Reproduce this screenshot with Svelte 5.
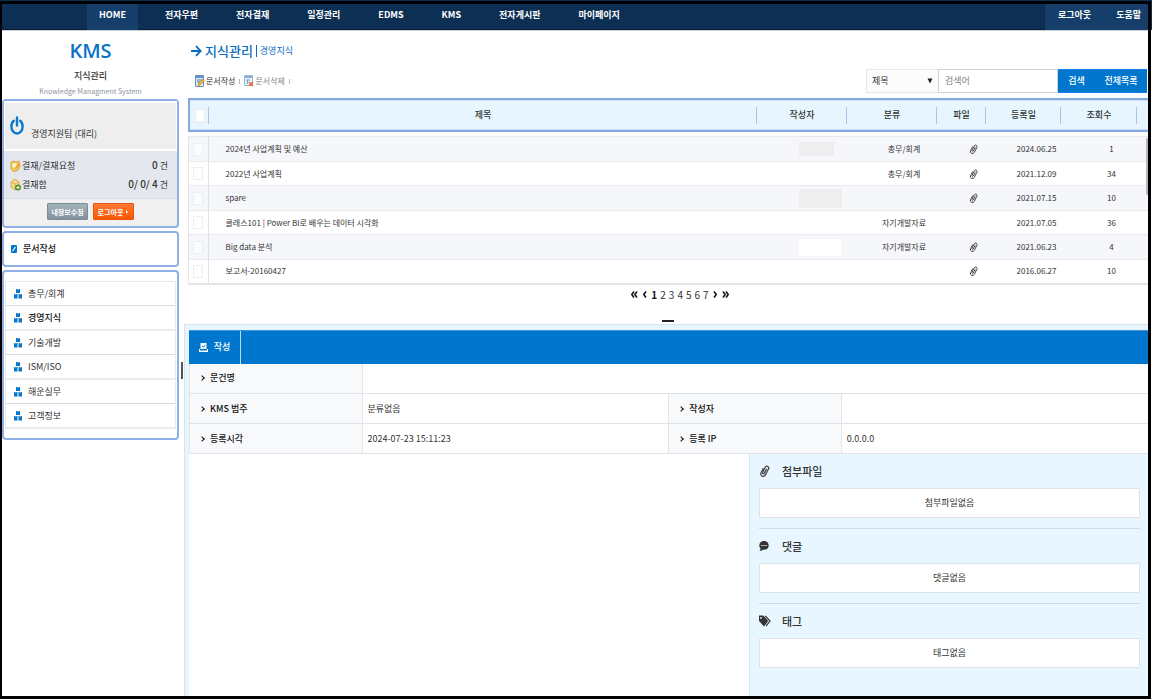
<script lang="ts">
	interface Doc {
		title: string;
		author: '' | 'short' | 'long' | 'blank';
		category: string;
		file: boolean;
		date: string;
		hits: number;
	}

	const menu = ['HOME', '전자우편', '전자결재', '일정관리', 'EDMS', 'KMS', '전자게시판', '마이페이지'];
	const categories = ['총무/회계', '경영지식', '기술개발', 'ISM/ISO', '해운실무', '고객정보'];
	const pages = [1, 2, 3, 4, 5, 6, 7];

	const docs: Doc[] = [
		{ title: '2024년 사업계획 및 예산', author: 'short', category: '총무/회계', file: true, date: '2024.06.25', hits: 1 },
		{ title: '2022년 사업계획', author: '', category: '총무/회계', file: true, date: '2021.12.09', hits: 34 },
		{ title: 'spare', author: 'long', category: '', file: true, date: '2021.07.15', hits: 10 },
		{ title: '클래스101 | Power BI로 배우는 데이터 시각화', author: '', category: '자기개발자료', file: false, date: '2021.07.05', hits: 36 },
		{ title: 'Big data 분석', author: 'blank', category: '자기개발자료', file: true, date: '2021.06.23', hits: 4 },
		{ title: '보고서-20160427', author: '', category: '', file: true, date: '2016.06.27', hits: 10 }
	];

	const extras = [
		{ icon: 'clip', title: '첨부파일', empty: '첨부파일없음' },
		{ icon: 'comment', title: '댓글', empty: '댓글없음' },
		{ icon: 'tag', title: '태그', empty: '태그없음' }
	];

	let selected = $state('경영지식');
	let page = $state(1);
	let field = $state('제목');
	let keyword = $state('');
</script>

{#snippet clip(size: number)}
	<svg width={size} height={size} viewBox="0 0 12 12" fill="none" stroke="#444" stroke-width="1.2" stroke-linecap="round" aria-hidden="true">
		<path d="M7.4 4.2 5.2 8.4a.9.9 0 0 1-1.600-.9L6.300 2.200a1.800 1.800 0 0 1 3.200 1.700L6.300 10.100a2.400 2.400 0 0 1-4.300-2.300L4.200 3.500" />
	</svg>
{/snippet}

<div class="frame">
	<header class="topbar">
		<nav class="menu">
			{#each menu as item, i}
				<a href="#menu" class:home={i === 0}>{item}</a>
			{/each}
		</nav>
		<div class="account">
			<a href="#logout">로그아웃</a>
			<a href="#help">도움말</a>
		</div>
	</header>

	<div class="body">
		<aside class="sidebar">
			<div class="brand">
				<strong>KMS</strong>
				<span class="brand-name">지식관리</span>
				<small>Knowledge Managment System</small>
			</div>

			<section class="box user">
				<div class="who">
					<svg width="14" height="20" viewBox="0 0 14 20" fill="none" stroke="#0a78cd" stroke-width="2.4" stroke-linecap="round" aria-hidden="true">
						<path d="M7 1.500v8M3.800 4.800C2.200 6 1.400 8 1.400 10.500c0 4 2.500 7 5.600 7s5.600-3 5.600-7c0-2.500-.8-4.500-2.400-5.700" />
					</svg>
					<span>경영지원팀 (대리)</span>
				</div>
				<div class="stats">
					<div class="stat">
						<svg width="11" height="12" viewBox="0 0 11 12" aria-hidden="true">
							<path d="M1 2 4 1l2 1 3-1 1 5-2 4-4 2-3-3z" fill="#f2c95a" stroke="#c9962e" stroke-width=".7" />
							<path d="m2 4 4-1 1 4-4 1z" fill="#fff3c4" />
							<path d="m5 8 4-5 1 1-4 5z" fill="#f09a2a" />
						</svg>
						<span>결재/결재요청</span>
						<span class="count"><b>0</b> 건</span>
					</div>
					<div class="stat">
						<svg width="11" height="13" viewBox="0 0 11 13" aria-hidden="true">
							<path d="m1 4 4-3 4 3v5l-4 3-4-3z" fill="#f7dc8c" stroke="#c99a38" stroke-width=".8" />
							<path d="m1 4 4 2 4-2M5 6v6" fill="none" stroke="#d8ab4a" stroke-width=".8" />
							<circle cx="8" cy="9.500" r="3" fill="#56912b" />
							<path d="M8 8v3M6.500 9.500h3" stroke="#fff" stroke-width="1" />
						</svg>
						<span>결재함</span>
						<span class="count"><b>0/ 0/ 4</b> 건</span>
					</div>
				</div>
				<div class="user-actions">
					<button class="edit">내정보수정</button>
					<button class="logout">로그아웃 <svg width="4" height="6" viewBox="0 0 4 6" aria-hidden="true"><path d="m1 1 2 2-2 2z" fill="#fff" /></svg></button>
				</div>
			</section>

			<a class="box write" href="#write">
				<svg width="6" height="8" viewBox="0 0 6 8" aria-hidden="true">
					<rect width="6" height="8" rx="1" fill="#0077cd" />
					<path d="m1.500 6 3-4" stroke="#fff" stroke-width="1.200" />
				</svg>
				문서작성
			</a>

			<section class="box tree">
				<ul>
					{#each categories as name}
						<li>
							<button class:on={selected === name} onclick={() => (selected = name)}>
								<svg width="8" height="11" viewBox="0 0 8 11" fill="#0a78cd" aria-hidden="true">
									<path d="M2 1h4v4H2zM0 6h3.500v4.500H0zM4.500 6H8v4.500H4.500z" />
									<path d="M3.500 1h1v1h-1zM1.300 6h1v1h-1zM5.800 6h1v1h-1z" fill="#9cc8ec" />
								</svg>
								{name}
							</button>
						</li>
					{/each}
				</ul>
			</section>
		</aside>

		<div class="splitter"><span></span></div>

		<main class="content">
			<div class="list-pane">
				<div class="heading">
					<div class="heading-left">
						<h1>
							<svg width="11" height="12" viewBox="0 0 11 12" fill="none" stroke="#0a6cc0" stroke-width="1.800" aria-hidden="true">
								<path d="M0 6h9.500M5 1.200 9.700 6 5 10.800" />
							</svg>
							지식관리 <i></i> <small>경영지식</small>
						</h1>
						<div class="tools">
							<button>
								<svg width="10" height="12" viewBox="0 0 10 12" aria-hidden="true">
									<path d="M.5.500h8v11h-8z" fill="#dcebf8" stroke="#6a90b8" />
									<path d="M1 1h7v2H1z" fill="#5d94cc" />
									<path d="M2 5h5M2 7h3" stroke="#477bb0" />
									<path d="m3 11 .5-2.500 4.500-4.500 1.500 1.500L5 10z" fill="#f4b72f" stroke="#b17a1b" stroke-width=".6" />
								</svg>
								문서작성
							</button>
							<i></i>
							<button class="dim">
								<svg width="10" height="12" viewBox="0 0 10 12" aria-hidden="true">
									<path d="M.5.500h8v10h-8z" fill="#e7f1fa" stroke="#9ab6d2" />
									<path d="M1 1h7v2H1z" fill="#88b0d8" />
									<path d="M2 5h4M3.500 5v4" stroke="#7a9fc4" />
									<path d="m5 7 4 4m0-4-4 4" stroke="#ee6a35" stroke-width="1.600" />
								</svg>
								문서삭제
							</button>
							<i></i>
						</div>
					</div>
					<form class="search" onsubmit={(e) => e.preventDefault()}>
						<div class="field">
							<select aria-label="검색 조건" bind:value={field}>
								<option>제목</option>
								<option>작성자</option>
							</select>
							<svg width="6" height="6" viewBox="0 0 6 6" aria-hidden="true"><path d="M.5.500h5L3 5.500z" fill="#222" /></svg>
						</div>
						<input type="text" aria-label="검색어" placeholder="검색어" bind:value={keyword} />
						<button class="go">검색</button>
						<button class="all" type="button" onclick={() => (keyword = '')}>전체목록</button>
					</form>
				</div>

				<table class="list-head">
					<thead>
						<tr>
							<th class="c-check"><input type="checkbox" aria-label="전체 선택" /></th>
							<th>제목</th>
							<th class="c-author">작성자</th>
							<th class="c-category">분류</th>
							<th class="c-file">파일</th>
							<th class="c-date">등록일</th>
							<th class="c-hits">조회수</th>
							<td class="c-gutter"></td>
						</tr>
					</thead>
				</table>

				<div class="list-scroll">
					<table class="list-body">
						<tbody>
							{#each docs as doc}
								<tr>
									<td class="c-check"><input type="checkbox" aria-label={doc.title} /></td>
									<td class="title">{doc.title}</td>
									<td class="c-author">
										{#if doc.author}<span class="mask {doc.author}"></span>{/if}
									</td>
									<td class="c-category">{doc.category}</td>
									<td class="c-file">{#if doc.file}{@render clip(10)}{/if}</td>
									<td class="c-date">{doc.date}</td>
									<td class="c-views">{doc.hits}</td>
								</tr>
							{/each}
						</tbody>
					</table>
					<span class="thumb"></span>
				</div>

				<nav class="pager">
					<button class="arrow" aria-label="처음">
						<svg width="7" height="7" viewBox="0 0 7 7"><path d="M3 .5.800 3.500 3 6.500M6 .5 3.800 3.500 6 6.500" /></svg>
					</button>
					<button class="arrow" aria-label="이전">
						<svg width="4" height="7" viewBox="0 0 4 7"><path d="M3 .5.800 3.500 3 6.500" /></svg>
					</button>
					{#each pages as n}
						<button class:current={page === n} onclick={() => (page = n)}>{n}</button>
					{/each}
					<button class="arrow" aria-label="다음">
						<svg width="4" height="7" viewBox="0 0 4 7"><path d="M1 .5 3.200 3.500 1 6.500" /></svg>
					</button>
					<button class="arrow" aria-label="마지막">
						<svg width="7" height="7" viewBox="0 0 7 7"><path d="M1 .5 3.200 3.500 1 6.500M4 .5 6.200 3.500 4 6.500" /></svg>
					</button>
				</nav>
				<div class="grip"></div>
			</div>

			<div class="detail-pane">
				<div class="tabs">
					<button>
						<svg width="9" height="9" viewBox="0 0 9 9" aria-hidden="true">
							<path d="M1.500 0h6v6h-6zM0 6h1v1.500h7V6h1v3H0z" fill="#fff" />
							<path d="m3 3 1.200 1.300L6.300 1.800" fill="none" stroke="#0077cd" />
						</svg>
						작성
					</button>
				</div>

				<table class="info">
					<colgroup>
						<col class="label" /><col class="value" /><col class="label" /><col class="value" />
					</colgroup>
					<tbody>
						<tr>
							<th scope="row"><span>문건명</span></th>
							<td colspan="3"></td>
						</tr>
						<tr>
							<th scope="row"><span>KMS 범주</span></th>
							<td>분류없음</td>
							<th scope="row"><span>작성자</span></th>
							<td></td>
						</tr>
						<tr>
							<th scope="row"><span>등록시각</span></th>
							<td>2024-07-23 15:11:23</td>
							<th scope="row"><span>등록 IP</span></th>
							<td>0.0.0.0</td>
						</tr>
					</tbody>
				</table>

				<div class="lower">
					<div class="document"></div>
					<div class="extras">
						{#each extras as extra}
							<section>
								<h2>
									{#if extra.icon === 'clip'}
										{@render clip(12)}
									{:else if extra.icon === 'comment'}
										<svg width="12" height="12" viewBox="0 0 12 12" aria-hidden="true">
											<path d="M5 1C2 1 .300 3 .300 5.400c0 1.400.5 2.300 1.300 3.100L.600 11c1.500 0 2.600-.5 3.300-1.200C7.500 10.200 9.700 8.200 9.700 5.400 9.700 3 8 1 5 1z" fill="#333" />
											<path d="M2.300 5.500h1.200M4.400 5.500h1.200M6.500 5.500h1.200" stroke="#fff" stroke-width="1.100" />
										</svg>
									{:else}
										<svg width="12" height="12" viewBox="0 0 12 12" aria-hidden="true">
											<path d="M0 .500h4.200L9.200 6 5 11.500 0 6z" fill="#333" />
											<circle cx="2" cy="3" r=".9" fill="#e8f7ff" />
											<path d="M6.200 1 11 6 7 11.200" fill="none" stroke="#333" stroke-width="1.200" />
										</svg>
									{/if}
									{extra.title}
								</h2>
								<p>{extra.empty}</p>
							</section>
						{/each}
					</div>
				</div>
			</div>
		</main>
	</div>
</div>

<style>
	:global(body) {
		background: #fff;
	}

	:global(#app) {
		display: flex;
		flex-direction: column;
		box-sizing: border-box;
		min-height: 100vh;
		padding: 1px 1px 1px 0;
		background: linear-gradient(#0d2f54 30px, #fff 30px);
	}

	.frame {
		flex: 1;
		display: flex;
		flex-direction: column;
		background: #fff;
		border: 3px solid #000;
		border-left-width: 2px;
		color: #333;
		font: 9px/12px 'Noto Sans CJK KR', sans-serif;
	}

	.frame *,
	.frame *::before {
		box-sizing: border-box;
	}

	a {
		color: inherit;
		text-decoration: none;
	}

	button {
		padding: 0;
		border: 0;
		background: none;
		color: inherit;
		font: inherit;
		cursor: pointer;
	}

	svg {
		flex: none;
	}

	/* Top menu */
	.topbar {
		display: flex;
		justify-content: space-between;
		height: 27px;
		background: #0d2f54;
		border-bottom: 1px solid #c8d0d8;
		box-shadow: inset 0 -1px #071d3a;
		color: #fff;
		font-weight: 700;
	}

	.menu,
	.account {
		display: flex;
	}

	.menu {
		padding-left: 85px;
	}

	.menu a {
		padding: 5px 19px;
	}

	.menu .home {
		margin-right: 8px;
		padding: 5px 12px;
		background: #153e6b;
	}

	.account {
		gap: 25px;
		padding: 0 7px 0 13px;
		background: #153e6b;
	}

	.account a {
		padding: 5px 0;
	}

	.body {
		flex: 1;
		display: flex;
	}

	/* Sidebar */
	.sidebar {
		flex: none;
		display: flex;
		flex-direction: column;
		gap: 3px;
		width: 177px;
	}

	.brand {
		display: flex;
		flex-direction: column;
		align-items: center;
		height: 65px;
		padding-top: 8px;
	}

	.brand strong {
		color: #0a72c7;
		font: 600 20px/24px 'Open Sans', sans-serif;
	}

	.brand-name {
		margin-top: 7px;
		font-weight: 500;
	}

	.brand small {
		margin-top: 4px;
		color: #8d93a0;
		font-size: 7px;
		line-height: 10px;
	}

	.box {
		border: 2px solid #8fb0e6;
		border-radius: 4px;
	}

	.user {
		background: #f0f0f0;
	}

	.who {
		display: flex;
		align-items: center;
		gap: 7px;
		height: 50px;
		padding: 0 5px;
		background: #eee;
		border: 1px solid #fff;
		border-top-width: 2px;
		border-bottom-width: 2px;
	}

	.who span {
		padding-top: 16px;
	}

	.stats {
		padding: 5px 9px 4px 6px;
		background: #e5e7ee;
		border-bottom: 1px solid #d9dbe0;
	}

	.stat {
		display: flex;
		align-items: center;
		gap: 1px;
		height: 19px;
	}

	.count {
		margin-left: auto;
	}

	.count b {
		font-size: 10px;
		font-weight: 500;
	}

	.user-actions {
		display: flex;
		justify-content: center;
		gap: 5px;
		padding: 4px 0 6px;
	}

	.user-actions button {
		display: flex;
		align-items: center;
		justify-content: center;
		width: 41px;
		height: 17px;
		border: 1px solid #7d8d97;
		border-radius: 1px;
		background: linear-gradient(#a3b1ba, #83939e);
		color: #fff;
		font-size: 7px;
		font-weight: 700;
	}

	.user-actions .logout {
		gap: 2px;
		border-color: #e8540b;
		background: linear-gradient(#ff7a35, #f65600);
	}

	.write {
		display: flex;
		align-items: center;
		gap: 6px;
		height: 36px;
		padding-left: 7px;
		color: #111;
		font-weight: 500;
	}

	.tree {
		padding: 9px 1px 9px;
	}

	.tree ul {
		margin: 0;
		padding: 0;
		list-style: none;
		border: 1px solid #e8e8e8;
		border-bottom: 0;
	}

	.tree li {
		border-bottom: 1px solid #dcdcdc;
	}

	.tree li:nth-child(even) {
		border-bottom: 2px solid #ececec;
	}

	.tree button {
		display: flex;
		align-items: center;
		gap: 6px;
		width: 100%;
		height: 23px;
		padding-left: 8px;
	}

	.tree .on {
		color: #111;
		font-weight: 500;
	}

	.splitter {
		flex: none;
		display: flex;
		width: 5px;
		padding: 331px 1px 0 2px;
	}

	.splitter span {
		width: 2px;
		height: 17px;
		background: #555;
	}

	/* Document list */
	.content {
		flex: 1;
		display: flex;
		flex-direction: column;
		min-width: 0;
	}

	.list-pane {
		padding-left: 4px;
	}

	.heading {
		display: flex;
		justify-content: space-between;
		align-items: flex-end;
		height: 67px;
		padding: 0 1px 5px 3px;
	}

	.heading-left {
		padding-bottom: 3px;
	}

	h1 {
		display: flex;
		align-items: center;
		gap: 3px;
		margin: 0;
		color: #0a6cc0;
		font-size: 13px;
		font-weight: 500;
		line-height: 20px;
	}

	h1 i {
		width: 1px;
		height: 12px;
		background: #0a6cc0;
	}

	h1 small {
		font-size: 9px;
		font-weight: 400;
	}

	.tools {
		display: flex;
		align-items: center;
		gap: 4px;
		padding: 11px 0 0 4px;
	}

	.tools button {
		display: flex;
		align-items: center;
		gap: 1px;
		height: 18px;
		font-size: 8px;
	}

	.tools .dim {
		color: #888;
	}

	.tools i {
		width: 1px;
		height: 5px;
		background: #bbb;
	}

	.search {
		display: flex;
		height: 24px;
	}

	.field {
		display: flex;
		align-items: center;
		width: 72px;
		padding-right: 5px;
		border: 1px solid #e6e6e6;
		border-right: 0;
		background: #fcfcfc;
	}

	select {
		flex: 1;
		height: 100%;
		padding: 0 0 0 5px;
		border: 0;
		background: none;
		appearance: none;
		color: #333;
		font: inherit;
	}

	.search input {
		width: 120px;
		padding: 0 6px;
		border: 1px solid #ccd3da;
		border-radius: 0;
		font: inherit;
	}

	.search input::placeholder {
		color: #808080;
	}

	.search button {
		background: #0077cd;
		border: 1px solid #0f80f0;
		border-width: 1px 0;
		color: #fff;
		font-weight: 500;
	}

	.go {
		width: 37px;
	}

	.all {
		width: 52px;
	}

	table {
		width: 100%;
		border-collapse: collapse;
		table-layout: fixed;
	}

	th,
	td {
		padding: 0;
	}

	input[type='checkbox'] {
		display: block;
		width: 10px;
		height: 13px;
		margin: 0 auto;
		appearance: none;
		background: #fff;
		border: 1px solid #eceef1;
	}

	.c-check {
		width: 19px;
	}

	.c-author,
	.c-category {
		width: 90px;
	}

	.c-file {
		width: 49px;
	}

	.c-date {
		width: 75px;
	}

	.c-hits {
		width: 76px;
	}

	.c-views {
		width: 73px;
	}

	.c-gutter {
		width: 11px;
	}

	.list-head {
		height: 34px;
		border-collapse: separate;
		border-spacing: 0;
		background: #e7f6fe;
		border: 2px solid #86a8e0;
		border-right: 0;
		box-shadow: inset 0 1px #cfdff4, inset 0 -1px #cfdff4;
	}

	.list-head th {
		background: linear-gradient(#a9c4ea, #a9c4ea) right center / 1px 17px no-repeat;
		font-weight: 500;
	}

	.list-scroll {
		position: relative;
		margin-top: 4px;
		border-left: 1px solid #e3e5e8;
	}

	.thumb {
		position: absolute;
		top: 2px;
		right: 0;
		width: 2px;
		height: 57px;
		background: #b8b8b8;
		border-radius: 1px;
	}

	.list-body {
		border-top: 1px solid #dfe1e5;
		border-bottom: 2px solid #e3e4e6;
		font-size: 8px;
	}

	.list-body td {
		height: 25px;
		border-top: 1px solid #e8eaed;
		text-align: center;
	}

	.list-body tr:nth-child(even) td {
		height: 24px;
	}

	.list-body tr:nth-child(odd) {
		background: #f6f7fb;
	}

	.list-body tr:nth-child(odd) input {
		background: #fbfcfd;
	}

	.list-body .c-check {
		border-right: 1px solid #dfe1e5;
	}

	.list-body .c-date {
		width: 77px;
	}

	.list-body .title {
		padding-left: 17px;
		text-align: left;
	}

	.list-body svg,
	.mask {
		display: block;
		margin: 0 auto;
	}

	.list-body .c-author {
		padding-left: 30px;
	}

	.mask {
		width: 35px;
		height: 14px;
		margin: 0;
		background: #eee;
	}

	.mask.long {
		width: 43px;
		height: 19px;
	}

	.mask.blank {
		width: 42px;
		height: 17px;
		background: #fff;
	}

	.pager {
		display: flex;
		align-items: center;
		justify-content: center;
		gap: 3px;
		height: 20px;
		padding-left: 24px;
		font-size: 10px;
	}

	.pager .current {
		color: #111;
		font-weight: 700;
	}

	.arrow {
		display: flex;
		margin: 0 1px;
	}

	.arrow svg {
		fill: none;
		stroke: #111;
		stroke-width: 1.5;
	}

	.grip {
		width: 12px;
		height: 2px;
		margin: 15px auto 2px;
		background: #222;
	}

	/* Detail */
	.detail-pane {
		flex: 1;
		display: flex;
		flex-direction: column;
		padding: 5px 0 0 4px;
		background: #e7f6fe;
		border-top: 1px solid #d9e2e9;
		border-left: 1px solid #d9e2e9;
	}

	.tabs {
		display: flex;
		height: 34px;
		background: #0077cd;
		border-top: 1px solid #3f93d4;
	}

	.tabs button {
		display: flex;
		align-items: center;
		justify-content: center;
		gap: 6px;
		width: 52px;
		border-right: 1px solid #b9dbf3;
		color: #fff;
		font-weight: 500;
	}

	.info {
		background: #fff;
	}

	.label {
		width: 18%;
	}

	.value {
		width: 32%;
	}

	.info th,
	.info td {
		height: 30px;
		padding-left: 5px;
		border-bottom: 1px solid #dfe3e7;
		text-align: left;
	}

	.info th {
		padding-left: 12px;
		background: #f8f9fb;
		border-right: 1px solid #e3e6ea;
		border-left: 1px solid #e3e6ea;
		color: #111;
		font-weight: 500;
	}

	.info th span {
		display: flex;
		align-items: center;
		gap: 6px;
	}

	.info th span::before {
		content: '';
		width: 4px;
		height: 4px;
		margin-left: -2px;
		border: solid #111;
		border-width: 1px 1px 0 0;
		transform: rotate(45deg);
	}

	.lower {
		flex: 1;
		display: grid;
		grid-template-columns: 561fr 398fr;
	}

	.document {
		background: #fff;
		border-right: 1px solid #dbe4ea;
	}

	.extras {
		padding: 0 8px 0 9px;
		background: #e8f7ff;
	}

	.extras section {
		height: 75px;
		border-bottom: 1px solid #cddbe4;
	}

	.extras section:last-child {
		border-bottom: 0;
	}

	h2 {
		display: flex;
		align-items: center;
		gap: 11px;
		height: 34px;
		margin: 0;
		font-size: 11px;
		font-weight: 500;
	}

	.extras p {
		margin: 0;
		background: #fff;
		border: 1px solid #dde2e6;
		border-radius: 1px;
		line-height: 28px;
		text-align: center;
	}
</style>
